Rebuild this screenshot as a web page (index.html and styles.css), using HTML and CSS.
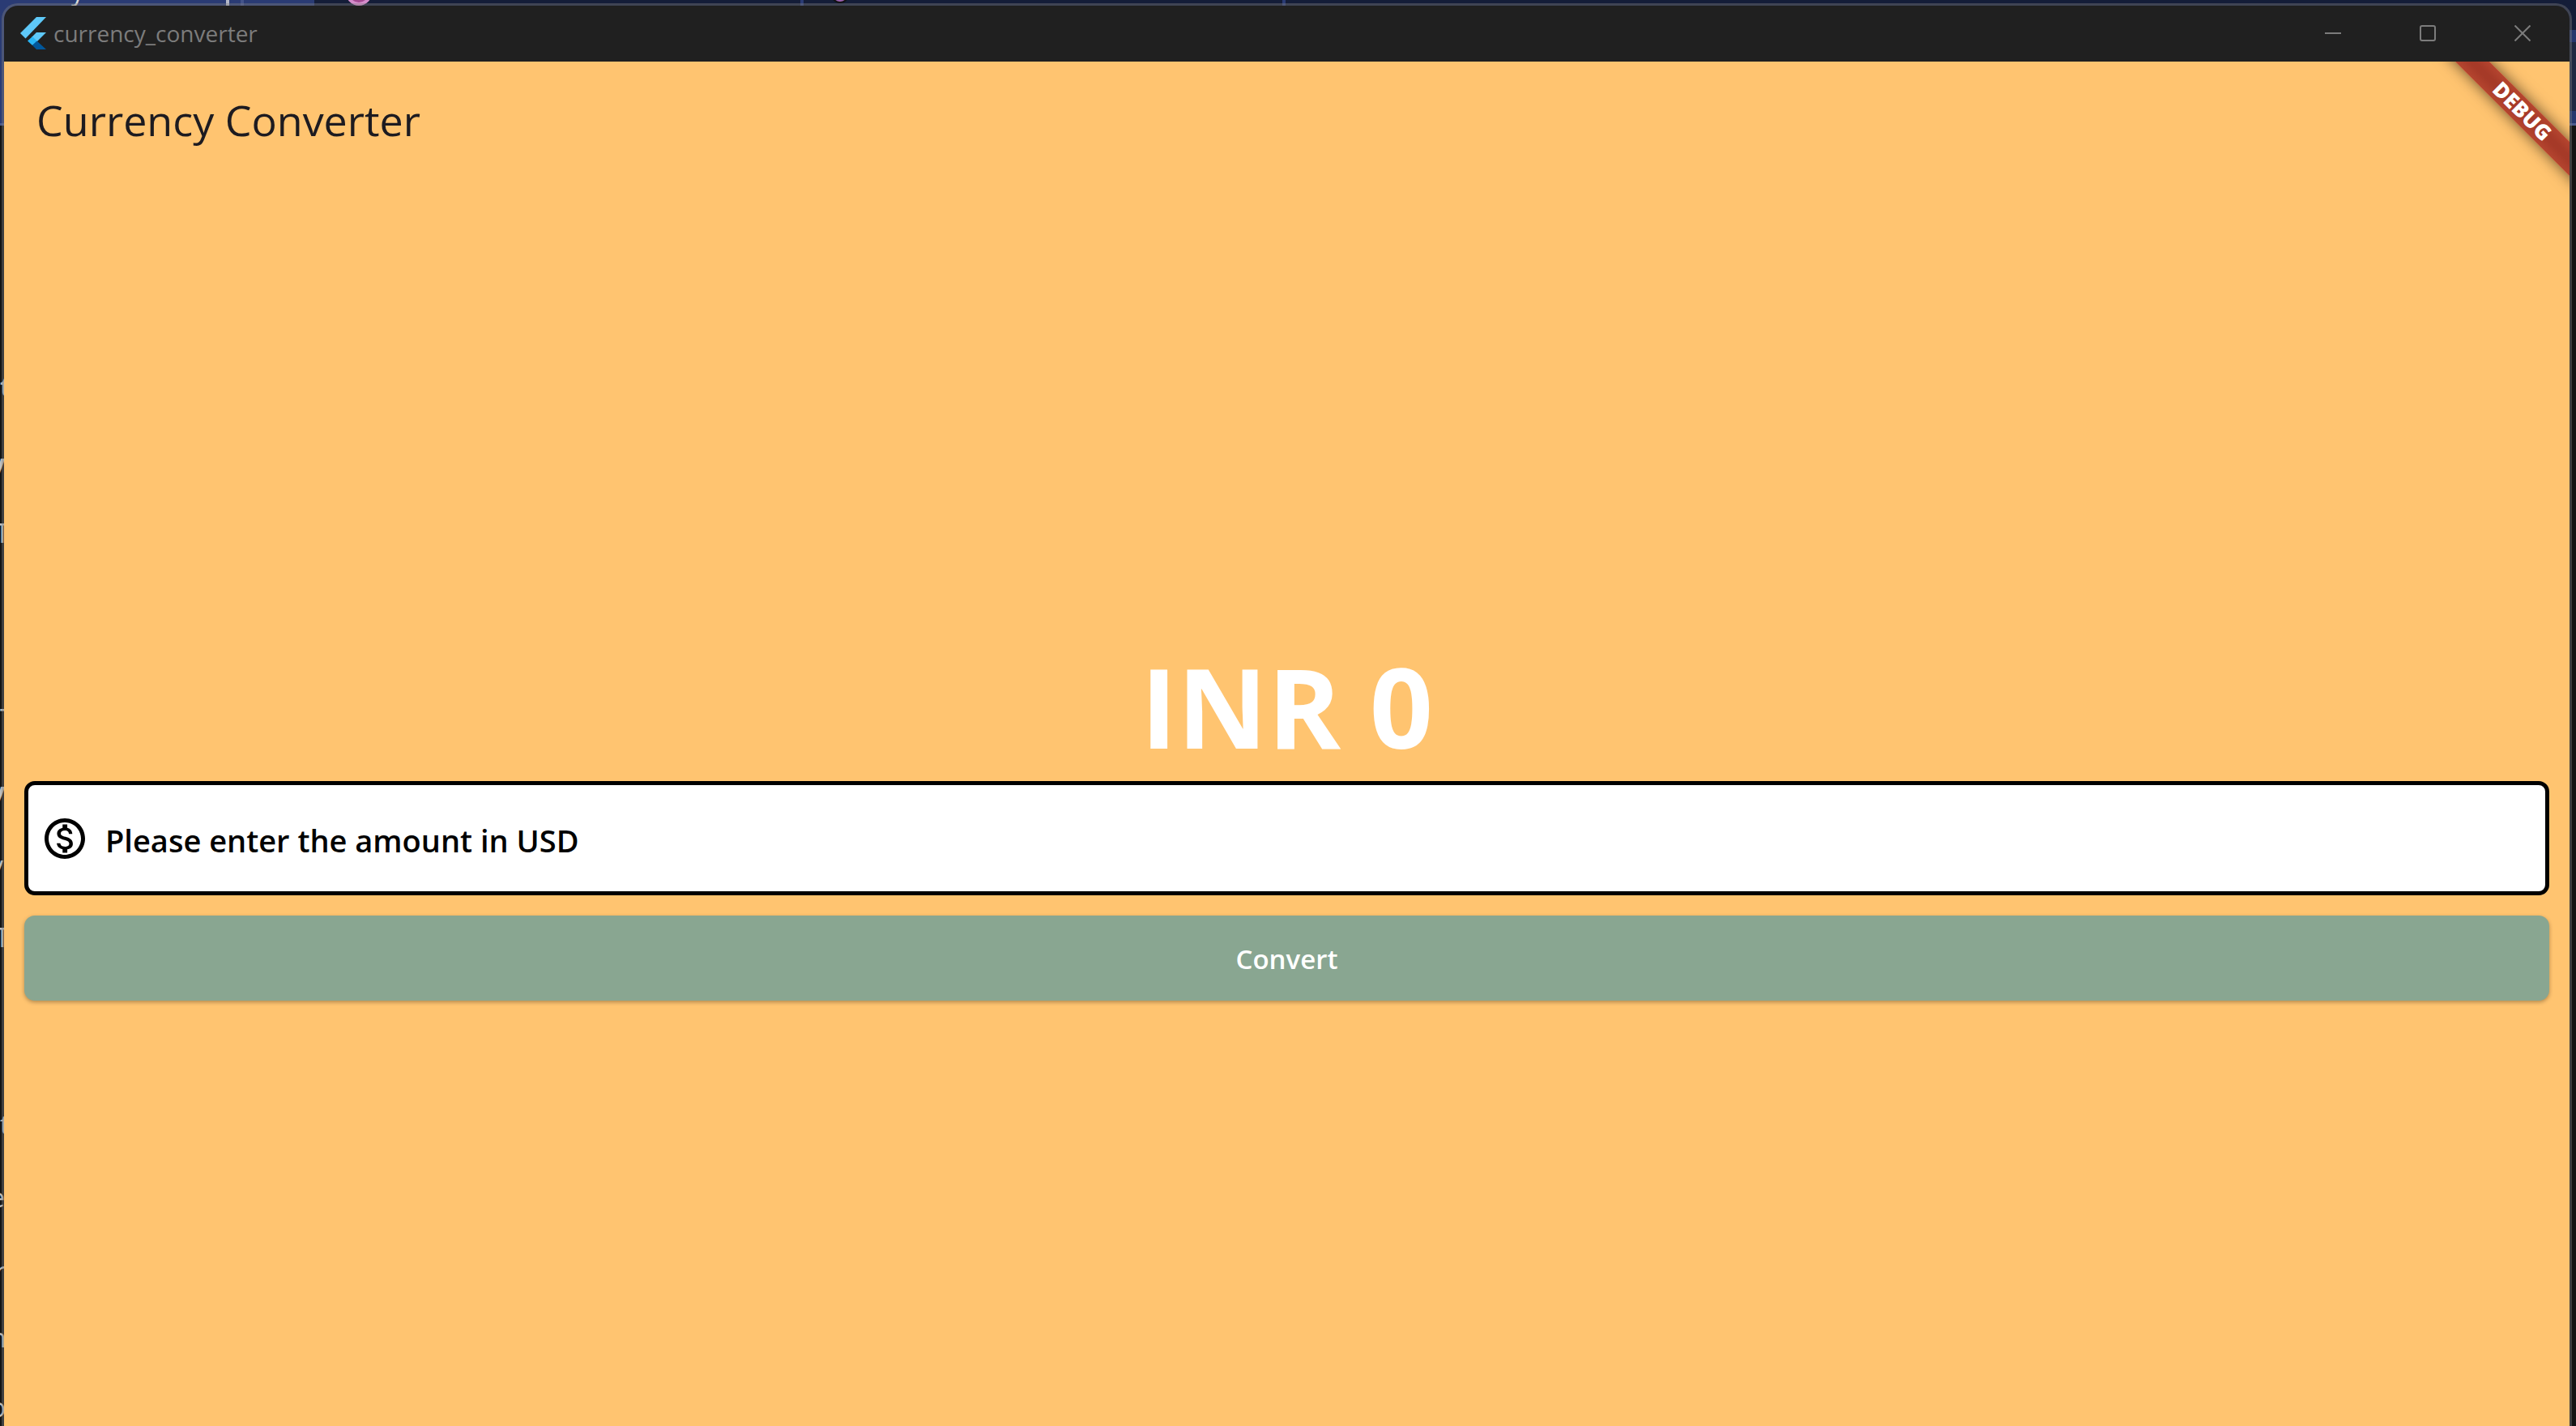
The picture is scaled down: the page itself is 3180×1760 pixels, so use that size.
FILE: index.html
```html
<!DOCTYPE html>
<html lang="en">
<head>
<meta charset="utf-8">
<title>currency_converter</title>
<link rel="stylesheet" href="styles.css">
</head>
<body>
<div class="desktop" aria-hidden="true">
  <div class="editor-tabs">
    <span class="tab-letter">y</span>
    <span class="tab-caret"></span>
    <span class="tab-line tab-line-a"></span>
    <span class="tab-line tab-line-b"></span>
    <span class="tab-line tab-line-c"></span>
    <span class="tab-icon tab-icon-pink"></span>
    <span class="tab-icon tab-icon-purple"></span>
    <span class="tab-side"></span>
  </div>
  <div class="editor-text">
    <span class="glyph bold" style="top:457px">t</span>
    <span class="glyph bold back" style="top:552px">y</span>
    <span class="glyph stem" style="top:638px">T</span>
    <span class="glyph" style="top:867px">T</span>
    <span class="glyph bold back" style="top:957px">v</span>
    <span class="glyph back" style="top:1048px">v</span>
    <span class="glyph stem" style="top:1137px">T</span>
    <span class="glyph" style="top:1368px">t</span>
    <span class="glyph back" style="top:1458px">e</span>
    <span class="glyph stem" style="top:1549px">r</span>
    <span class="glyph back" style="top:1631px">n</span>
    <span class="glyph back" style="top:1717px">o</span>
  </div>
</div>

<div class="window">
  <header class="titlebar">
    <svg class="app-icon" viewBox="0 0 32 40" aria-hidden="true">
      <path fill="#5ec8f8" d="M20 0H32L6.500 26.500L0 20Z"/>
      <path fill="#5ec8f8" d="M20 19H32L20 31L14 25Z"/>
      <path fill="#29b6f6" d="M15 24L21 30L15 35L9 29.500Z"/>
      <path fill="#01579b" d="M15 35L20.500 29.500L32 40H20Z"/>
    </svg>
    <span class="window-title">currency_converter</span>
    <div class="window-controls">
      <button class="control" aria-label="Minimize"><svg viewBox="0 0 20 20"><path d="M0 10H20"/></svg></button>
      <button class="control" aria-label="Maximize"><svg viewBox="0 0 20 20"><rect x="1" y="1" width="18" height="18" rx="2"/></svg></button>
      <button class="control" aria-label="Close"><svg viewBox="0 0 20 20"><path d="M.5 .5L19.500 19.500M19.500 .5L.5 19.500"/></svg></button>
    </div>
  </header>
  <div class="app">
    <div class="debug-banner">DEBUG</div>
    <div class="appbar"><h1 class="app-title">Currency Converter</h1></div>
    <main class="converter">
      <output class="result">INR 0</output>
      <label class="amount">
        <svg class="amount-icon" viewBox="0 0 24 24" aria-hidden="true"><path d="M12 2C6.480 2 2 6.480 2 12s4.480 10 10 10 10-4.480 10-10S17.520 2 12 2zm0 18c-4.410 0-8-3.590-8-8s3.590-8 8-8 8 3.590 8 8-3.590 8-8 8zm.31-8.860c-1.770-.45-2.340-.94-2.340-1.670 0-.84.79-1.430 2.100-1.430 1.380 0 1.900.66 1.940 1.640h1.710c-.05-1.340-.87-2.570-2.490-2.970V5H10.900v1.690c-1.510.32-2.720 1.300-2.720 2.810 0 1.790 1.490 2.690 3.660 3.210 1.950.46 2.340 1.150 2.340 1.870 0 .53-.39 1.390-2.100 1.390-1.600 0-2.230-.72-2.320-1.640H8.040c.1 1.700 1.360 2.660 2.860 2.970V19h2.340v-1.670c1.520-.29 2.720-1.160 2.730-2.770-.01-2.200-1.900-2.960-3.660-3.420z"/></svg>
        <input class="amount-input" type="text" inputmode="decimal" placeholder="Please enter the amount in USD" aria-label="Amount in USD">
      </label>
      <button class="convert" type="button">Convert</button>
    </main>
  </div>
</div>
</body>
</html>
```
FILE: styles.css
```css
* { box-sizing: border-box; }

body {
  margin: 0;
  min-height: 100vh;
  display: flex;
  overflow: hidden;
  background: #141414;
  font-family: "Open Sans", "Noto Sans", sans-serif;
}

/* Editor that shows around the edges of the window */
.desktop {
  position: absolute;
  inset: 0;
  overflow: hidden;
}

.editor-tabs {
  position: relative;
  height: 155px;
  overflow: hidden;
  border-bottom: 3px solid #4b5a8e;
  background: linear-gradient(90deg, #2a3b74 388px, #141d38 388px);
}

.tab-letter {
  position: absolute;
  left: 88px;
  top: -32px;
  font-size: 32px;
  line-height: 40px;
  color: #d8d8d8;
}

.tab-caret,
.tab-line {
  position: absolute;
  top: 0;
  width: 4px;
  height: 8px;
  background: #2a3b74;
}

.tab-caret { left: 279px; background: #b4b8c8; }
.tab-line-a { left: 297px; background: #43538a; }
.tab-line-b { left: 988px; }
.tab-line-c { left: 1583px; }

.tab-icon {
  position: absolute;
  border-radius: 50%;
}

.tab-icon-pink {
  left: 427px;
  top: -25px;
  width: 32px;
  height: 32px;
  border: 4px solid #d58ccb;
  background: #a54a92;
}

.tab-icon-purple {
  left: 1026px;
  top: -18px;
  width: 22px;
  height: 22px;
  border: 2px solid #111;
  background: #9a5fb0;
}

.tab-side {
  position: absolute;
  top: 37px;
  right: 0;
  width: 12px;
  height: 115px;
  border: solid #26376e;
  border-width: 15px 0;
  background: #1f2942;
}

.glyph {
  position: absolute;
  left: 0;
  font-size: 32px;
  line-height: 40px;
  color: #c0c0c0;
}

.bold { font-weight: 700; }
.back { left: -12px; }
.stem { left: -6px; }

/* Window frame */
.window {
  position: relative;
  flex: 1;
  display: flex;
  flex-direction: column;
  margin: 4px 5px 0 2px;
  border: 3px solid rgba(128, 128, 128, 0.4);
  border-bottom: 0;
  border-radius: 20px 20px 0 0;
  background: #202020;
  background-clip: padding-box;
  overflow: hidden;
}

.titlebar {
  display: flex;
  align-items: center;
  height: 69px;
  padding: 0 0 2px 20px;
  color: #7c7c7c;
}

.app-icon {
  width: 32px;
  height: 40px;
  margin-right: 9px;
}

.window-title {
  flex: 1;
  font-size: 28px;
  line-height: 40px;
}

.window-controls {
  display: flex;
  align-self: stretch;
}

.control {
  display: flex;
  align-items: center;
  justify-content: center;
  width: 117px;
  padding: 0;
  border: 0;
  background: none;
  color: inherit;
}

.control svg {
  width: 20px;
  height: 20px;
  fill: none;
  stroke: currentColor;
  stroke-width: 2;
}

/* Application */
.app {
  position: relative;
  flex: 1;
  overflow: hidden;
  background: #ffc470;
}

.appbar {
  display: flex;
  align-items: center;
  height: 140px;
  padding: 4px 40px 0;
}

.app-title {
  margin: 0;
  font-size: 52px;
  font-weight: 400;
  line-height: 72px;
  color: #1d1b20;
}

.debug-banner {
  position: absolute;
  top: 45px;
  right: -60px;
  width: 240px;
  height: 30px;
  padding-left: 4px;
  transform: rotate(45deg);
  background: linear-gradient(#b5452f, #a63a28 40%, #a63a28 60%, #b5452f);
  box-shadow: 0 0 18px rgba(0, 0, 0, 0.6);
  color: #fff;
  font-size: 26px;
  font-weight: 800;
  line-height: 28px;
  text-align: center;
}

.converter {
  display: flex;
  flex-direction: column;
  padding: 565px 25px 25px;
}

.result {
  margin-bottom: 3px;
  font-size: 137px;
  font-weight: 700;
  line-height: 180px;
  text-align: center;
  color: #fff;
}

.amount {
  display: flex;
  align-items: center;
  height: 141px;
  margin-bottom: 25px;
  padding: 0 15px;
  border: 5px solid #000;
  border-radius: 13px;
  background: #fff;
}

.amount-icon {
  width: 60px;
  height: 60px;
  margin-right: 20px;
}

.amount-input {
  flex: 1;
  min-width: 0;
  padding: 4px 0 0;
  border: 0;
  outline: 0;
  background: none;
  font: 600 38px/56px "Open Sans", "Noto Sans", sans-serif;
  color: #000;
}

.amount-input::placeholder {
  color: #000;
  opacity: 1;
}

.convert {
  height: 105px;
  padding: 2px 0 0;
  border: 0;
  border-radius: 13px;
  background: #89a691;
  box-shadow: 0 2px 5px rgba(0, 0, 0, 0.3);
  color: #fff;
  font: 600 33px/48px "Open Sans", "Noto Sans", sans-serif;
}
```
